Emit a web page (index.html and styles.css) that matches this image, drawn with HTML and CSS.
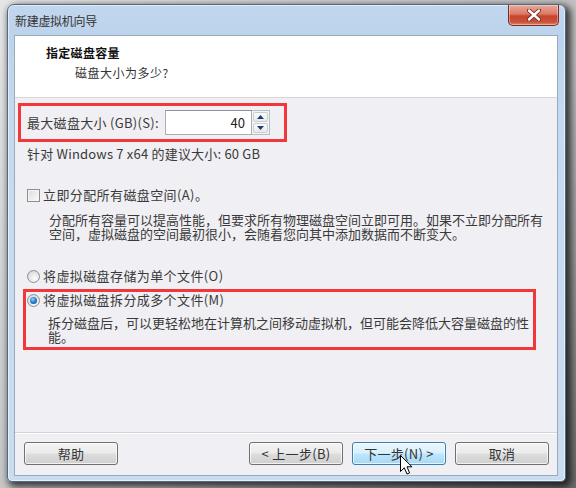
FILE: index.html
```html
<!DOCTYPE html>
<html lang="zh-CN">
<head>
<meta charset="utf-8">
<title>新建虚拟机向导</title>
<link rel="stylesheet" href="styles.css">
</head>
<body>
<div class="window">
  <div class="titlebar">
    <span class="title">新建虚拟机向导</span>
    <button class="close" aria-label="关闭">
      <svg width="14" height="12" viewBox="0 0 14 12">
        <path d="M2 1.5 L12 10.5 M12 1.5 L2 10.5" stroke="#6b2a22" stroke-width="4.2" stroke-linecap="round"/>
        <path d="M2 1.5 L12 10.5 M12 1.5 L2 10.5" stroke="#ffffff" stroke-width="2.4" stroke-linecap="round"/>
      </svg>
    </button>
  </div>
  <div class="client">
    <div class="header">
      <div class="h-title">指定磁盘容量</div>
      <div class="h-sub">磁盘大小为多少?</div>
    </div>
    <div class="content">
      <div class="mark size-row">
        <label class="size-label">最大磁盘大小 (GB)(S):</label>
        <div class="spin">
          <div class="spin-input">40</div>
          <div class="spin-btns">
            <span class="spin-btn"><svg width="7" height="4" viewBox="0 0 7 4"><path d="M0 4 L3.5 0 L7 4 Z" fill="#1c3f6e"/></svg></span>
            <span class="spin-btn"><svg width="7" height="4" viewBox="0 0 7 4"><path d="M0 0 L3.5 4 L7 0 Z" fill="#1c3f6e"/></svg></span>
          </div>
        </div>
      </div>
      <div class="hint">针对 Windows 7 x64 的建议大小: 60 GB</div>
      <div class="opt opt-check"><span class="checkbox"></span><span>立即分配所有磁盘空间(A)。</span></div>
      <p class="desc desc-alloc">分配所有容量可以提高性能，但要求所有物理磁盘空间立即可用。如果不立即分配所有空间，虚拟磁盘的空间最初很小，会随着您向其中添加数据而不断变大。</p>
      <div class="opt opt-single"><span class="radio"></span><span>将虚拟磁盘存储为单个文件(O)</span></div>
      <div class="mark split">
        <div class="opt opt-split"><span class="radio checked"></span><span>将虚拟磁盘拆分成多个文件(M)</span></div>
        <p class="desc desc-split">拆分磁盘后，可以更轻松地在计算机之间移动虚拟机，但可能会降低大容量磁盘的性能。</p>
      </div>
    </div>
    <div class="footer">
      <button class="btn">帮助</button>
      <button class="btn btn-back">&lt; 上一步(B)</button>
      <button class="btn btn-hover">下一步(N) &gt;</button>
      <button class="btn">取消</button>
    </div>
  </div>
  <svg class="cursor" width="13" height="20" viewBox="0 0 13 20">
    <path d="M0.5 0.5 L0.5 16.5 L4.3 12.8 L7 19 L9.6 17.9 L7 11.8 L12 11.8 Z" fill="#ffffff" stroke="#000000" stroke-width="1" stroke-linejoin="round"/>
  </svg>
</div>
</body>
</html>
```

FILE: styles.css
```css
* {
  box-sizing: border-box;
}

html, body {
  margin: 0;
  padding: 0;
}

body {
  width: 576px;
  height: 488px;
  overflow: hidden;
  background: linear-gradient(135deg, #e6e6e6 0%, #bdbdbd 60%, #6a6a6a 100%);
  font-family: "Noto Sans CJK SC", "Noto Sans", sans-serif;
  font-size: 13px;
  color: #3a3a3a;
  padding: 4px 0 0 7px;
}

.window {
  position: relative;
  width: 559px;
  height: 478px;
  border: 1px solid #4f6a87;
  border-radius: 7px 7px 5px 5px;
  padding: 30px 7px 5px 6px;
  background: linear-gradient(to bottom, #c2d7ee 0px, #bcd3eb 30px, #c6daef 120px, #c9dcf0 100%);
  box-shadow: inset 0 0 0 1px rgba(255, 255, 255, 0.55), 3px 3px 7px 2px rgba(0, 0, 0, 0.7);
}

.titlebar {
  position: absolute;
  left: 0;
  top: 0;
  right: 0;
  height: 30px;
}

.title {
  position: absolute;
  left: 7px;
  top: 8px;
  font-size: 12px;
  line-height: 16px;
  color: #333333;
  letter-spacing: -0.3px;
}

.close {
  position: absolute;
  top: 0;
  right: 6px;
  width: 51px;
  height: 21px;
  padding: 0;
  border: 1px solid #7a2d22;
  border-top: none;
  border-radius: 0 0 5px 5px;
  background: linear-gradient(to bottom, #e9a99b 0%, #dc7a65 45%, #c8442e 55%, #c9513a 85%, #dd8a6e 100%);
  box-shadow: inset 0 0 0 1px rgba(255, 255, 255, 0.35);
  display: flex;
  align-items: center;
  justify-content: center;
}

.client {
  width: 544px;
  height: 441px;
  border: 1px solid #97aac0;
  display: flex;
  flex-direction: column;
  background: #f0eff3;
}

.header {
  height: 62px;
  background: #ffffff;
  border-bottom: 1px solid #d6d6d6;
  padding: 9px 0 0 31px;
}

.h-title {
  font-size: 12px;
  line-height: 16px;
  font-weight: bold;
  color: #111111;
  letter-spacing: 0.3px;
}

.h-sub {
  font-size: 12px;
  line-height: 16px;
  margin: 4px 0 0 29px;
  color: #333333;
  letter-spacing: 0.5px;
}

.content {
  height: 334px;
  padding-top: 5px;
}

.mark {
  border: 3px solid #f2363a;
}

.size-row {
  margin-left: 3px;
  width: 269px;
  height: 39px;
  display: flex;
  align-items: center;
  padding-left: 6px;
}

.size-label {
  width: 138px;
  line-height: 16px;
  white-space: nowrap;
  letter-spacing: 0.3px;
}

.spin {
  display: flex;
  height: 25px;
}

.spin-input {
  width: 87px;
  height: 25px;
  border: 1px solid #abadb3;
  border-top-color: #8e9197;
  background: #ffffff;
  text-align: right;
  padding-right: 6px;
  line-height: 23px;
  color: #222222;
}

.spin-btns {
  width: 18px;
  height: 25px;
  display: flex;
  flex-direction: column;
  border: 1px solid #b8bcc4;
  border-left: none;
  padding: 1px;
  gap: 1px;
  background: #f4f5f7;
}

.spin-btn {
  flex: 1;
  display: flex;
  align-items: center;
  justify-content: center;
  border: 1px solid #c9ced6;
  border-radius: 2px;
  background: linear-gradient(to bottom, #fbfbfc, #e7e9ed);
}

.hint {
  margin: 4px 0 0 12px;
  line-height: 16px;
  letter-spacing: 0.2px;
}

.opt {
  display: flex;
  align-items: center;
  gap: 3px;
  line-height: 16px;
  height: 16px;
  letter-spacing: 0.4px;
}

.opt-check {
  margin: 25px 0 0 12px;
}

.opt-single {
  margin: 27px 0 0 12px;
}

.opt-split {
  margin-left: 1px;
}

.checkbox {
  width: 13px;
  height: 13px;
  border: 1px solid #8f8f8f;
  background: linear-gradient(135deg, #dcdcdc, #fbfbfb);
  box-shadow: inset 0 0 0 1px #f4f4f4;
}

.radio {
  width: 13px;
  height: 13px;
  border-radius: 50%;
  border: 1px solid #8c8f94;
  background: radial-gradient(circle at 60% 65%, #fdfdfd 0%, #e4e4e4 55%, #cfcfcf 100%);
  display: flex;
  align-items: center;
  justify-content: center;
}

.radio.checked::after {
  content: "";
  width: 7px;
  height: 7px;
  border-radius: 50%;
  background: radial-gradient(circle at 40% 35%, #8fd2ff 0%, #2a82d6 45%, #0d3f80 100%);
}

.desc {
  margin: 0;
  font-size: 13px;
  line-height: 14px;
  color: #3a3a3a;
  letter-spacing: 0;
}

.desc-alloc {
  margin: 10px 0 0 34px;
  width: 503px;
}

.split {
  margin: 5px 0 0 8px;
  width: 513px;
  height: 61px;
}

.desc-split {
  margin: 8px 0 0 22px;
  width: 488px;
}

.footer {
  height: 43px;
  border-top: 1px solid #d3d3d6;
  box-shadow: inset 0 1px 0 #ffffff;
  display: flex;
  align-items: flex-start;
  gap: 9px;
  padding: 9px 8px 0 9px;
}

.btn {
  width: 94px;
  height: 23px;
  padding: 0;
  border: 1px solid #707070;
  border-radius: 3px;
  background: linear-gradient(to bottom, #f3f3f3 0%, #ebebeb 48%, #dddddd 52%, #cfcfcf 100%);
  box-shadow: inset 0 0 0 1px rgba(255, 255, 255, 0.7);
  font-family: "Noto Sans CJK SC", "Noto Sans", sans-serif;
  font-size: 13px;
  line-height: 20px;
  color: #333333;
  letter-spacing: 0.3px;
}

.btn-back {
  margin-left: auto;
}

.btn-hover {
  border-color: #3c7fb1;
  background: linear-gradient(to bottom, #eaf6fd 0%, #d9f0fc 48%, #bee6fd 52%, #a7d9f5 100%);
}

.cursor {
  position: absolute;
  left: 392px;
  top: 450px;
}
```
